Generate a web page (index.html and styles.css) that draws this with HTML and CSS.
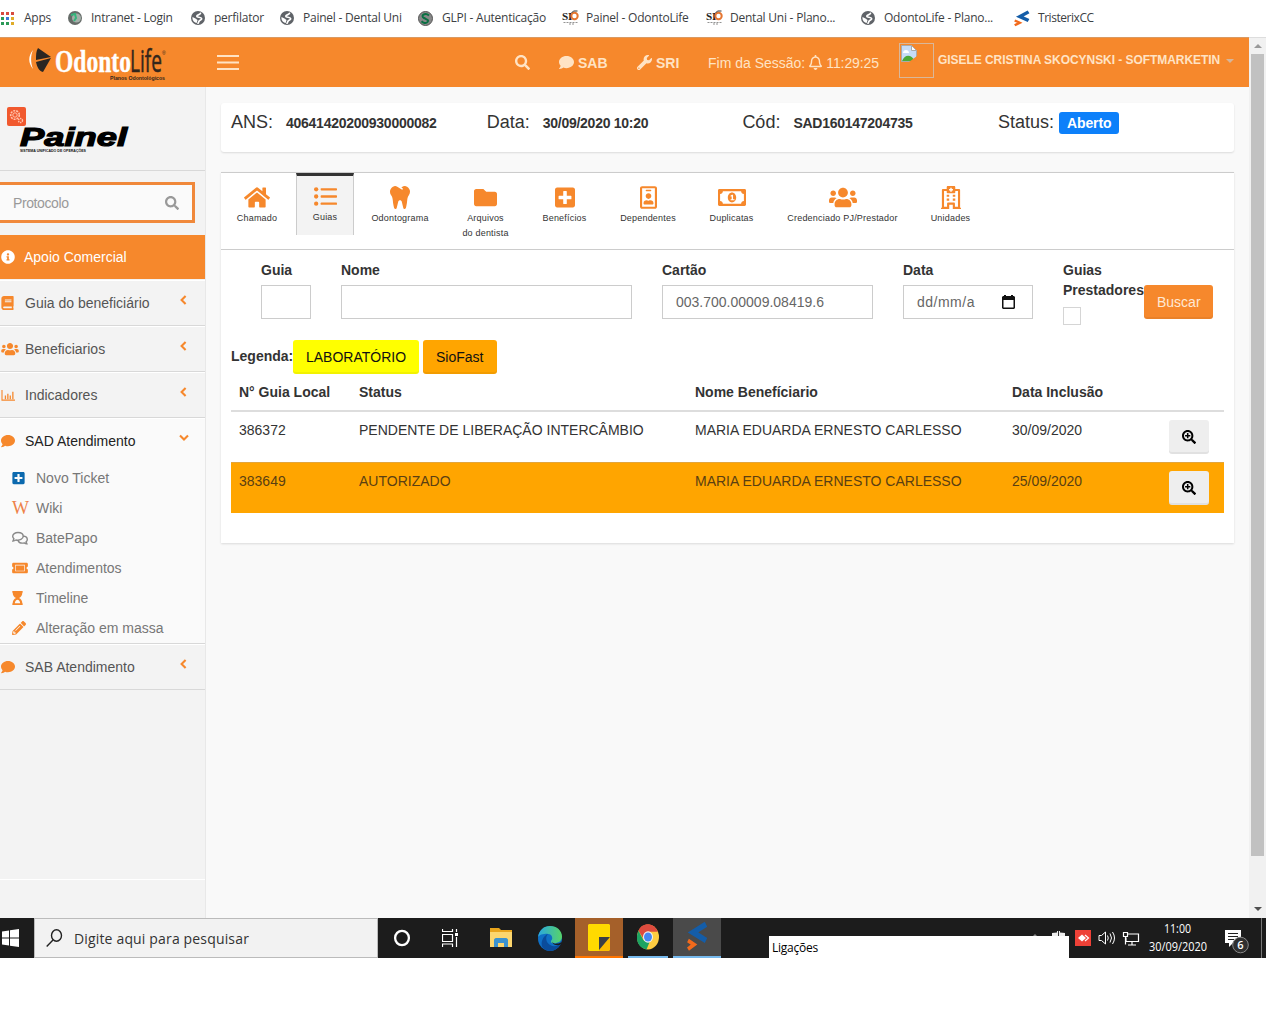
FILE: index.html
```html
<!DOCTYPE html>
<html lang="pt-BR">
<head>
<meta charset="utf-8">
<title>Painel - OdontoLife</title>
<link rel="stylesheet" href="styles.css">
</head>
<body>
<svg class="defs" width="0" height="0" aria-hidden="true">
  <symbol id="search" viewBox="0 0 512 512"><path d="M505 442.7L405.3 343c-4.5-4.5-10.6-7-17-7H372c27.6-35.3 44-79.7 44-128C416 93.1 322.9 0 208 0S0 93.1 0 208s93.1 208 208 208c48.3 0 92.7-16.4 128-44v16.3c0 6.4 2.5 12.5 7 17l99.7 99.7c9.4 9.4 24.6 9.4 33.9 0l28.3-28.3c9.4-9.4 9.4-24.6.1-34zM208 336c-70.7 0-128-57.2-128-128 0-70.7 57.2-128 128-128 70.7 0 128 57.2 128 128 0 70.7-57.2 128-128 128z"/></symbol>
  <symbol id="search-plus" viewBox="0 0 512 512"><path d="M304 192v32c0 6.600-5.400 12-12 12h-56v56c0 6.600-5.400 12-12 12h-32c-6.600 0-12-5.400-12-12v-56h-56c-6.600 0-12-5.400-12-12v-32c0-6.600 5.400-12 12-12h56v-56c0-6.600 5.400-12 12-12h32c6.600 0 12 5.400 12 12v56h56c6.600 0 12 5.400 12 12zm201 284.700L476.700 505c-9.400 9.400-24.600 9.400-33.900 0L343 405.300c-4.500-4.500-7-10.600-7-17V372c-35.300 27.600-79.700 44-128 44C93.100 416 0 322.900 0 208S93.100 0 208 0s208 93.100 208 208c0 48.300-16.400 92.700-44 128h16.300c6.400 0 12.500 2.500 17 7l99.700 99.700c9.300 9.400 9.300 24.600 0 34zM344 208c0-75.200-60.800-136-136-136S72 132.800 72 208s60.800 136 136 136 136-60.800 136-136z"/></symbol>
  <symbol id="comment" viewBox="0 0 512 512"><path d="M256 32C114.600 32 0 125.100 0 240c0 49.600 21.400 95 57 130.700C44.500 421.100 2.700 466 2.200 466.500c-2.200 2.300-2.800 5.700-1.500 8.700S4.800 480 8 480c66.300 0 116-31.800 140.600-51.400 32.700 12.300 69 19.400 107.400 19.400 141.400 0 256-93.100 256-208S397.400 32 256 32z"/></symbol>
  <symbol id="wrench" viewBox="0 0 512 512"><path d="M507.730 109.100c-2.240-9.030-13.540-12.090-20.120-5.510l-74.360 74.360-67.880-11.310-11.310-67.880 74.360-74.360c6.620-6.620 3.430-17.900-5.660-20.160-47.380-11.740-99.550.91-136.580 37.930-39.640 39.640-50.550 97.100-34.050 147.200L18.740 402.760c-24.990 24.990-24.990 65.510 0 90.500 24.990 24.990 65.510 24.990 90.500 0l213.210-213.210c50.120 16.710 107.470 5.680 147.370-34.220 37.070-37.070 49.700-89.320 37.910-136.730zM64 472c-13.250 0-24-10.750-24-24 0-13.260 10.750-24 24-24s24 10.740 24 24c0 13.250-10.750 24-24 24z"/></symbol>
  <symbol id="bell" viewBox="0 0 448 512"><path d="M439.390 362.290c-19.320-20.760-55.470-51.990-55.470-154.290 0-77.700-54.480-139.900-127.940-155.160V32c0-17.670-14.320-32-31.980-32s-31.980 14.330-31.980 32v20.840C118.560 68.100 64.080 130.300 64.080 208c0 102.300-36.150 133.530-55.470 154.290-6 6.450-8.660 14.160-8.610 21.710.11 16.400 12.980 32 32.100 32h383.800c19.120 0 32-15.600 32.100-32 .05-7.550-2.610-15.270-8.610-21.710zM67.530 368c21.220-27.970 44.420-74.330 44.530-159.420 0-.2-.06-.38-.06-.58 0-61.860 50.140-112 112-112s112 50.140 112 112c0 .2-.06.38-.06.58.11 85.100 23.310 131.460 44.530 159.420H67.530zM224 512c35.320 0 63.970-28.650 63.970-64H160.030c0 35.350 28.650 64 63.970 64z"/></symbol>
  <symbol id="home" viewBox="0 0 576 512"><path d="M280.370 148.260L96 300.110V464a16 16 0 0 0 16 16l112.060-.29a16 16 0 0 0 15.920-16V368a16 16 0 0 1 16-16h64a16 16 0 0 1 16 16v95.640a16 16 0 0 0 16 16.050L464 480a16 16 0 0 0 16-16V300L295.670 148.260a12.190 12.190 0 0 0-15.300 0zM571.600 251.470L488 182.560V44.050a12 12 0 0 0-12-12h-56a12 12 0 0 0-12 12v72.610L318.470 43a48 48 0 0 0-61 0L4.340 251.470a12 12 0 0 0-1.600 16.900l25.500 31A12 12 0 0 0 45.150 301l235.220-193.740a12.190 12.190 0 0 1 15.300 0L530.900 301a12 12 0 0 0 16.900-1.600l25.500-31a12 12 0 0 0-1.700-16.930z"/></symbol>
  <symbol id="list" viewBox="0 0 512 512"><circle cx="48" cy="96" r="48"/><circle cx="48" cy="256" r="48"/><circle cx="48" cy="416" r="48"/><rect x="148" y="70" width="364" height="52" rx="16"/><rect x="148" y="230" width="364" height="52" rx="16"/><rect x="148" y="390" width="364" height="52" rx="16"/></symbol>
  <symbol id="tooth" viewBox="0 0 448 512"><path d="M443.980 96.250c-11.010-45.220-47.110-82.060-92.010-93.720-32.190-8.360-63 5.100-89.140 24.330-3.250 2.390-6.960 3.730-10.500 5.480l28.320 18.210c7.420 4.770 9.580 14.670 4.800 22.110-4.460 6.950-14.270 9.860-22.110 4.800L162.830 12.840c-20.700-10.850-43.380-16.400-66.810-10.310-44.900 11.670-81 48.500-92.010 93.720-10.130 41.620-.42 80.810 21.500 110.430 23.360 31.570 32.680 68.660 36.290 107.350 4.400 47.160 10.330 94.160 20.940 140.320l7.800 33.950c3.190 13.870 15.490 23.700 29.670 23.700 13.970 0 26.150-9.550 29.540-23.160l34.470-138.420c4.560-18.320 20.960-31.160 39.760-31.160s35.200 12.850 39.760 31.160l34.470 138.420c3.390 13.610 15.570 23.160 29.540 23.160 14.180 0 26.480-9.830 29.670-23.700l7.800-33.950c10.610-46.150 16.530-93.160 20.940-140.320 3.610-38.700 12.930-75.780 36.290-107.350 21.950-29.610 31.660-68.800 21.530-110.430z"/></symbol>
  <symbol id="folder" viewBox="0 0 512 512"><path d="M464 128H272l-64-64H48C21.490 64 0 85.490 0 112v288c0 26.510 21.490 48 48 48h416c26.510 0 48-21.490 48-48V176c0-26.510-21.490-48-48-48z"/></symbol>
  <symbol id="plus-square" viewBox="0 0 448 512"><path d="M400 32H48C21.500 32 0 53.500 0 80v352c0 26.500 21.500 48 48 48h352c26.500 0 48-21.500 48-48V80c0-26.500-21.500-48-48-48zm-32 252c0 6.600-5.400 12-12 12h-92v92c0 6.600-5.400 12-12 12h-56c-6.600 0-12-5.400-12-12v-92H92c-6.600 0-12-5.400-12-12v-56c0-6.600 5.400-12 12-12h92v-92c0-6.600 5.400-12 12-12h56c6.600 0 12 5.400 12 12v92h92c6.600 0 12 5.400 12 12v56z"/></symbol>
  <symbol id="badge" viewBox="0 0 384 512"><path d="M336 0H48C21.500 0 0 21.500 0 48v416c0 26.500 21.500 48 48 48h288c26.500 0 48-21.500 48-48V48c0-26.500-21.500-48-48-48zm0 464H48V48h288v416zM144 112h96c8.800 0 16-7.200 16-16s-7.200-16-16-16h-96c-8.800 0-16 7.200-16 16s7.200 16 16 16zm48 176c35.300 0 64-28.700 64-64s-28.700-64-64-64-64 28.700-64 64 28.700 64 64 64zm-89.600 128h179.200c12.400 0 22.400-8.600 22.400-19.200v-19.200c0-31.800-30.100-57.600-67.200-57.600-10.800 0-18.700 8-44.800 8-26.900 0-33.400-8-44.800-8-37.100 0-67.200 25.800-67.200 57.600v19.200c0 10.600 10 19.200 22.400 19.200z"/></symbol>
  <symbol id="money" viewBox="0 0 640 512"><path fill-rule="evenodd" d="M32 64h576c18 0 32 14 32 32v320c0 18-14 32-32 32H32c-18 0-32-14-32-32V96c0-18 14-32 32-32zM48 176v160c35 0 64 29 64 64h416c0-35 29-64 64-64V176c-35 0-64-29-64-64H112c0 35-29 64-64 64zM320 144c53 0 96 50 96 112s-43 112-96 112-96-50-96-112 43-112 96-112zM344 192h-24l-37 22 12 24 17-10v68h-24v24h88v-24h-32z"/></symbol>
  <symbol id="users" viewBox="0 0 640 512"><path d="M96 224c35.300 0 64-28.700 64-64s-28.700-64-64-64-64 28.700-64 64 28.700 64 64 64zm448 0c35.300 0 64-28.700 64-64s-28.700-64-64-64-64 28.700-64 64 28.700 64 64 64zm32 32h-64c-17.600 0-33.500 7.100-45.100 18.600 40.300 22.100 68.900 62 75.100 109.400h66c17.700 0 32-14.300 32-32v-32c0-35.300-28.700-64-64-64zm-256 0c61.900 0 112-50.100 112-112S381.900 32 320 32 208 82.100 208 144s50.100 112 112 112zm76.800 32h-8.300c-20.800 10-43.900 16-68.500 16s-47.600-6-68.500-16h-8.300C179.600 288 128 339.600 128 403.200V432c0 26.500 21.500 48 48 48h288c26.500 0 48-21.500 48-48v-28.800c0-63.600-51.600-115.200-115.200-115.200zm-223.700-13.400C161.500 263.100 145.600 256 128 256H64c-35.300 0-64 28.700-64 64v32c0 17.700 14.300 32 32 32h65.900c6.300-47.400 34.900-87.300 75.200-109.400z"/></symbol>
  <symbol id="hospital" viewBox="0 0 448 512"><path fill-rule="evenodd" d="M0 488h20V88c0-12 12-24 24-24h84V24c0-13 11-24 24-24h144c13 0 24 11 24 24v40h84c12 0 24 12 24 24v400h20v24H264v-96h-80v96H0zM68 112v352h68v-72c0-13 11-24 24-24h128c13 0 24 11 24 24v72h68V112h-60v24c0 13-11 24-24 24H152c-13 0-24-11-24-24v-24zM208 40v28h-28v32h28v28h32v-28h28V68h-28V40zM128 192h56v48h-56zM264 192h56v48h-56zM128 280h56v48h-56zM264 280h56v48h-56z"/></symbol>
  <symbol id="info" viewBox="0 0 512 512"><path d="M256 8C119.043 8 8 119.083 8 256c0 136.997 111.043 248 248 248s248-111.003 248-248C504 119.083 392.957 8 256 8zm0 110c23.196 0 42 18.804 42 42s-18.804 42-42 42-42-18.804-42-42 18.804-42 42-42zm56 254c0 6.627-5.373 12-12 12h-88c-6.627 0-12-5.373-12-12v-24c0-6.627 5.373-12 12-12h12v-64h-12c-6.627 0-12-5.373-12-12v-24c0-6.627 5.373-12 12-12h64c6.627 0 12 5.373 12 12v100h12c6.627 0 12 5.373 12 12v24z"/></symbol>
  <symbol id="book" viewBox="0 0 448 512"><path fill-rule="evenodd" d="M96 0h328c13 0 24 11 24 24v336c0 8-4 14-9 18-4 15-4 59 0 74 5 4 9 10 9 18v18c0 13-11 24-24 24H96c-53 0-96-43-96-96V96C0 43 43 0 96 0zM96 384c-42 0-42 64 0 64h285v-64zM128 128v32h240v-32zM128 192v32h240v-32z"/></symbol>
  <symbol id="chart" viewBox="0 0 16 14"><path fill="none" stroke="currentColor" stroke-width="1.200" d="M1 1v11h14"/><path d="M4 7h1.400v4H4zM6.600 5H8v6H6.600zM9.200 7h1.400v4H9.200zM12 3h1.400v8H12z"/></symbol>
  <symbol id="comments" viewBox="0 0 16 14"><path fill="none" stroke="currentColor" stroke-width="1.400" d="M6 1.500c-3 0-5.300 1.600-5.300 3.800 0 1 .5 1.800 1.200 2.500L1 10c1.300 0 2.200-.5 3-1 3.600.8 7.200-1 7.200-3.700C11.200 3.100 9 1.500 6 1.500zM11 5c2.500.2 4.300 1.600 4.300 3.500 0 1-.5 1.800-1.200 2.400l.8 1.900c-1.200 0-2-.4-2.700-.9-2.600.6-5.300-.3-6.200-2.500"/></symbol>
  <symbol id="ticket" viewBox="0 0 576 512"><path fill-rule="evenodd" d="M48 64h480c27 0 48 21 48 48v96c-64 0-64 96 0 96v96c0 27-21 48-48 48H48c-27 0-48-21-48-48v-96c64 0 64-96 0-96v-96c0-27 21-48 48-48zM112 136v240h352V136zM136 160h304v192H136z"/></symbol>
  <symbol id="hourglass" viewBox="0 0 384 512"><path fill-rule="evenodd" d="M16 0h352c9 0 16 7 16 16v32c0 9-7 16-16 16 0 91-51 168-120 192 69 24 120 101 120 192 9 0 16 7 16 16v32c0 9-7 16-16 16H16c-9 0-16-7-16-16v-32c0-9 7-16 16-16 0-91 51-168 120-192C67 232 16 155 16 64 7 64 0 57 0 48V16C0 7 7 0 16 0zM94 448h196c-10-80-48-130-98-130s-88 50-98 130z"/></symbol>
  <symbol id="pencil" viewBox="0 0 512 512"><path fill-rule="evenodd" d="M497.900 142.100l-46.100 46.100c-4.700 4.700-12.300 4.700-17 0l-111-111c-4.700-4.700-4.700-12.300 0-17l46.100-46.100c18.700-18.700 49.100-18.700 67.900 0l60.100 60.100c18.800 18.700 18.800 49.100 0 67.900zM284.200 99.800L21.600 362.400.4 483.900c-2.900 16.400 11.400 30.600 27.800 27.800l121.500-21.300 262.600-262.600c4.700-4.700 4.700-12.300 0-17l-111-111c-4.800-4.700-12.400-4.700-17.100 0zM124 340l154-154c13-8 26 5 18 18L142 358c-13 8-26-5-18-18zM88 424h48v36l-65 11-30-30 11-65h36z"/></symbol>
  <symbol id="left" viewBox="0 0 7 10"><path d="M5.600 1L1.600 5l4 4" fill="none" stroke="currentColor" stroke-width="2.100"/></symbol>
  <symbol id="down" viewBox="0 0 10 7"><path d="M1 1.400l4 4 4-4" fill="none" stroke="currentColor" stroke-width="2.100"/></symbol>
  <symbol id="globe" viewBox="0 0 14 14"><circle cx="7" cy="7" r="7" fill="#5f6368"/><path fill="none" stroke="#fff" stroke-width="1.700" stroke-linecap="round" d="M9.500 2.300c-.8 2-3.800 1.300-3.700 3 .1 1.500 4.300.3 4.800 2.200.4 1.700-1.700 1.300-2.600 2.700-.5.800-.3 1.500-1 2"/><path fill="#fff" d="M1.500 6l3 1.500L6.500 9l-.8 3C3 11.500 1 9 1.500 6z"/></symbol>
  <symbol id="tri" viewBox="0 0 22 26"><path d="M20 3L8 10l12 6" fill="none" stroke="#145da8" stroke-width="5"/><path d="M1 16l7 3.500-7 4" fill="none" stroke="#f26a1c" stroke-width="3.500"/></symbol>
</svg>

<div class="bookmarks">
  <div><svg viewBox="0 0 13 13" width="13" height="13"><path fill="#d84b40" d="M0 0h3v3H0zM5 0h3v3H5zM10 0h3v3h-3z"/><path fill="#2c9a57" d="M0 5h3v3H0zM0 10h3v3H0zM5 10h3v3H5z"/><path fill="#3c78d8" d="M5 5h3v3H5z"/><path fill="#dfac29" d="M10 5h3v3h-3zM10 10h3v3h-3z"/></svg><span>Apps</span></div>
  <div><svg width="14" height="14" viewBox="0 0 14 14"><circle cx="7" cy="7" r="7" fill="#656b68"/><circle cx="8.500" cy="7" r="4.500" fill="#a4afa9"/><path d="M3 4l4-1 1 4-2 3" stroke="#35b57c" stroke-width="2" fill="none"/></svg><span>Intranet - Login</span></div>
  <div><svg width="14" height="14"><use href="#globe"/></svg><span>perfilator</span></div>
  <div><svg width="14" height="14"><use href="#globe"/></svg><span>Painel - Dental Uni</span></div>
  <div><svg width="15" height="15" viewBox="0 0 15 15"><circle cx="7.500" cy="7.500" r="7" fill="#888" stroke="#555"/><path d="M11 4.500C7 1 2 5 6 7s5 2 3.500 4-4.500.8-6-.8" stroke="#0a7043" stroke-width="2" fill="none"/></svg><span>GLPI - Autenticação</span></div>
  <div><svg width="17" height="16" viewBox="0 0 17 16"><text class="si" x="0" y="9.500" textLength="10" lengthAdjust="spacingAndGlyphs">SI</text><circle cx="12.500" cy="6" r="3.200" fill="none" stroke="#e57631" stroke-width="2"/><path d="M9.500 3l2-2h4" stroke="#333" fill="none"/><path d="M1.500 12.500h14M7 14h5" stroke="#777" stroke-width=".8" stroke-dasharray="2 1"/></svg><span>Painel - OdontoLife</span></div>
  <div><svg width="17" height="16" viewBox="0 0 17 16"><text class="si" x="0" y="9.500" textLength="10" lengthAdjust="spacingAndGlyphs">SI</text><circle cx="12.500" cy="6" r="3.200" fill="none" stroke="#e57631" stroke-width="2"/><path d="M9.500 3l2-2h4" stroke="#333" fill="none"/><path d="M1.500 12.500h14M7 14h5" stroke="#777" stroke-width=".8" stroke-dasharray="2 1"/></svg><span>Dental Uni - Plano...</span></div>
  <div><svg width="14" height="14"><use href="#globe"/></svg><span>OdontoLife - Plano...</span></div>
  <div><svg width="16" height="17" viewBox="0 0 22 26" preserveAspectRatio="none"><use href="#tri" width="22" height="26"/></svg><span>TristerixCC</span></div>
</div>

<div class="window">
  <div class="page">
    <header class="topbar">
      <svg class="brand" width="206" height="50" viewBox="0 37 206 50">
        <path d="M33 49c-5 6-5 13 0 19-2.500-7-2.500-13 0-19z" fill="#fff"/>
        <path d="M38 47l13 9-15 3c0-5 0-9 2-12zM36 61l15-4-8 14c-4-1-6-5-7-10z" fill="#2b2622"/>
        <text x="55" y="71" class="odonto" textLength="76" lengthAdjust="spacingAndGlyphs">Odonto</text>
        <text x="130" y="71" class="life" textLength="32" lengthAdjust="spacingAndGlyphs">Life</text>
        <text x="162" y="54" class="reg">®</text>
        <text x="110" y="79" class="planos" textLength="55" lengthAdjust="spacingAndGlyphs">Planos Odontológicos</text>
      </svg>
      <svg class="burger" width="22" height="15"><path d="M0 1h22M0 7.500h22M0 14h22" stroke="#ffe3c4" stroke-width="2"/></svg>
      <svg class="t-search" width="15" height="15"><use href="#search"/></svg>
      <div class="t-item t-sab"><svg width="15" height="15"><use href="#comment"/></svg><b>SAB</b></div>
      <div class="t-item t-sri"><svg width="15" height="15"><use href="#wrench"/></svg><b>SRI</b></div>
      <div class="t-item t-end"><span>Fim da Sessão:</span><svg width="13" height="15"><use href="#bell"/></svg><span class="clock">11:29:25</span></div>
      <div class="avatar"><svg width="16" height="17" viewBox="0 0 16 17"><path d="M.5.5h10l5 5v11H.5z" fill="#c7dcf7" stroke="#aaa"/><path d="M10.500.5v5h5z" fill="#fff" stroke="#aaa"/><path d="M2 8c0-4 6-4 6 0z" fill="#fff"/><path d="M1 16c3-7 9-7 13 0z" fill="#4caa37"/><path d="M8 17l8-6v6z" fill="#f6872b"/></svg></div>
      <b class="user">GISELE CRISTINA SKOCYNSKI - SOFTMARKETIN</b>
      <i class="caret"></i>
    </header>
    <div class="cols">
      <nav class="side">
        <div class="painel">
          <svg width="150" height="60" viewBox="0 100 150 60">
            <rect x="7" y="107" width="19" height="19" rx="2" fill="#f1592e"/>
            <circle cx="15" cy="115" r="4.300" fill="none" stroke="#ffc3ad" stroke-width="1.600" stroke-dasharray="2 1"/><circle cx="15" cy="115" r="2.200" fill="none" stroke="#ffc3ad"/><circle cx="20.500" cy="120.500" r="2" fill="none" stroke="#ffc3ad" stroke-width="1.400" stroke-dasharray="1.300 .7"/>
            <text x="20" y="146" class="pn" textLength="107" lengthAdjust="spacingAndGlyphs">Painel</text>
            <text x="20" y="151.500" class="pn-sub" textLength="66" lengthAdjust="spacingAndGlyphs">SISTEMA UNIFICADO DE OPERAÇÕES</text>
          </svg>
        </div>
        <div class="proto"><span>Protocolo</span><svg width="14" height="14"><use href="#search"/></svg></div>
        <div class="row active"><svg width="14" height="14"><use href="#info"/></svg><span>Apoio Comercial</span></div>
        <div class="row"><svg width="13" height="14"><use href="#book"/></svg><span>Guia do beneficiário</span><svg class="chev" width="7" height="10"><use href="#left"/></svg></div>
        <div class="row"><svg width="18" height="14"><use href="#users"/></svg><span>Beneficiarios</span><svg class="chev" width="7" height="10"><use href="#left"/></svg></div>
        <div class="row"><svg width="15" height="13"><use href="#chart"/></svg><span>Indicadores</span><svg class="chev" width="7" height="10"><use href="#left"/></svg></div>
        <div class="open">
          <div class="row dark"><svg width="14" height="14"><use href="#comment"/></svg><span>SAD Atendimento</span><svg class="chev" width="10" height="7"><use href="#down"/></svg></div>
          <div class="sub"><svg class="blue" width="13" height="14"><use href="#plus-square"/></svg><span>Novo Ticket</span></div>
          <div class="sub"><i class="w">W</i><span>Wiki</span></div>
          <div class="sub"><svg class="gray" width="16" height="14"><use href="#comments"/></svg><span>BatePapo</span></div>
          <div class="sub"><svg width="16" height="14"><use href="#ticket"/></svg><span>Atendimentos</span></div>
          <div class="sub"><svg width="11" height="14"><use href="#hourglass"/></svg><span>Timeline</span></div>
          <div class="sub"><svg width="14" height="14"><use href="#pencil"/></svg><span>Alteração em massa</span></div>
        </div>
        <div class="row"><svg width="14" height="14"><use href="#comment"/></svg><span>SAB Atendimento</span><svg class="chev" width="7" height="10"><use href="#left"/></svg></div>
        <div class="side-foot"></div>
      </nav>
      <main>
        <section class="card summary">
          <div><span>ANS:</span><b>40641420200930000082</b></div>
          <div><span>Data:</span><b>30/09/2020 10:20</b></div>
          <div><span>Cód:</span><b>SAD160147204735</b></div>
          <div><span>Status:</span><em>Aberto</em></div>
        </section>
        <section class="card panel">
          <div class="tabs">
            <div class="tab t1"><svg width="26" height="23"><use href="#home"/></svg><span>Chamado</span></div>
            <div class="tab t2 on"><svg width="23" height="23"><use href="#list"/></svg><span>Guias</span></div>
            <div class="tab t3"><svg width="20" height="23"><use href="#tooth"/></svg><span>Odontograma</span></div>
            <div class="tab t4"><svg width="23" height="23"><use href="#folder"/></svg><span>Arquivos<br>do dentista</span></div>
            <div class="tab t5"><svg width="20" height="23"><use href="#plus-square"/></svg><span>Benefícios</span></div>
            <div class="tab t6"><svg width="17" height="23"><use href="#badge"/></svg><span>Dependentes</span></div>
            <div class="tab t7"><svg width="28" height="23"><use href="#money"/></svg><span>Duplicatas</span></div>
            <div class="tab t8"><svg width="28" height="23"><use href="#users"/></svg><span>Credenciado PJ/Prestador</span></div>
            <div class="tab t9"><svg width="20" height="23"><use href="#hospital"/></svg><span>Unidades</span></div>
          </div>
          <div class="form">
            <label>Guia<div class="inp"></div></label>
            <label>Nome<div class="inp"></div></label>
            <label>Cartão<div class="inp">003.700.00009.08419.6</div></label>
            <label>Data<div class="inp date"><span>dd/mm/a</span><svg width="13" height="14" viewBox="0 0 13 14"><path fill-rule="evenodd" d="M1 1h1V0h2v1h5V0h2v1h1l1 1v11l-1 1H1l-1-1V2zm.500 4v7.500h10V5z"/></svg></div></label>
            <label>Guias<br>Prestadores<div class="check"></div></label>
            <div class="btn buscar">Buscar</div>
          </div>
          <div class="legend"><b>Legenda:</b><div class="btn lab">LABORATÓRIO</div><div class="btn sio">SioFast</div></div>
          <div class="tr th"><span>N° Guia Local</span><span>Status</span><span>Nome Benefíciario</span><span>Data Inclusão</span></div>
          <div class="tr"><span>386372</span><span>PENDENTE DE LIBERAÇÃO INTERCÂMBIO</span><span>MARIA EDUARDA ERNESTO CARLESSO</span><span>30/09/2020</span><div class="btn zoom"><svg width="14" height="14"><use href="#search-plus"/></svg></div></div>
          <div class="tr hl"><span>383649</span><span>AUTORIZADO</span><span>MARIA EDUARDA ERNESTO CARLESSO</span><span>25/09/2020</span><div class="btn zoom"><svg width="14" height="14"><use href="#search-plus"/></svg></div></div>
        </section>
      </main>
    </div>
  </div>
  <div class="scroll"><i class="up"></i><div class="thumb"></div><i class="dn"></i></div>
</div>

<div class="taskbar">
  <div class="start"><svg width="17" height="18" viewBox="0 0 17 18"><path fill="#fff" d="M0 2.500l7-1v7H0zM8 1.300L17 0v8.500H8zM0 9.500h7v7l-7-1zM8 9.500h9V18l-9-1.300z"/></svg></div>
  <div class="tsearch"><svg width="17" height="18" viewBox="0 0 17 18"><ellipse cx="10.500" cy="6.500" rx="5" ry="5.700" fill="none" stroke="#222" stroke-width="1.400"/><path d="M7 11L.7 17.500" stroke="#222" stroke-width="1.400"/></svg><span>Digite aqui para pesquisar</span></div>
  <div class="app"><svg width="18" height="18" viewBox="0 0 18 18"><ellipse cx="9" cy="9" rx="6.900" ry="7.200" fill="none" stroke="#fff" stroke-width="2.300"/></svg></div>
  <div class="app"><svg width="17" height="18" viewBox="0 0 17 18"><path d="M.5 0v2.500h10V0M.5 18v-3h10v3M.5 5.500h10v7H.500zM14.500 0v3M14.500 8v10" fill="none" stroke="#fff" stroke-width="1.200"/><path d="M13 4h3v3h-3z" fill="#fff"/></svg></div>
  <div class="app files"><svg width="22" height="20" viewBox="0 0 22 20"><path fill="#e9a51c" d="M0 0h9l2 2h11v3H0z"/><path fill="#fcd66e" d="M0 4h22v15H0z"/><path fill="#3b92cf" d="M4 19v-7c0-1 1-2 2-2h10c1 0 2 1 2 2v7h-4v-4H8v4z"/></svg></div>
  <div class="app"><svg width="24" height="25" viewBox="0 0 24 26" preserveAspectRatio="none"><defs><linearGradient id="eg" x2="1"><stop stop-color="#2aa7e0"/><stop offset="1" stop-color="#57d468"/></linearGradient></defs><ellipse cx="12" cy="13" rx="12" ry="13" fill="#0f6fc5"/><path d="M10 8c-4 5-1 12 6 13 3 0 5-1 7-3-4 9-13 10-18 5C2 19 4 11 10 8z" fill="#0a4c9b"/><path d="M0 12C1 4 6 0 12 0c7 0 12 5 12 11 0 5-4 7-8 7-3 0-4-2-2-4 1-3-1-6-5-6-4 0-8 1-9 4z" fill="url(#eg)"/><path d="M14 16c1 2 3 2.500 5 2.300 2-.2 4-1 5-2.300l-1 3c-3 2-8 1-9-3z" fill="#1c1c1c"/></svg></div>
  <div class="app sticky"><svg width="22" height="27" viewBox="0 0 22 27"><path d="M1 0h20l1 1v14l-9 12H1l-1-1V1z" fill="#ffda00"/><path d="M11 14h11v12l-1 1H11z" fill="#fbbd00"/><path d="M11 13h11L11 26z" fill="#3b3f45"/></svg></div>
  <div class="app chrome"><svg width="22" height="26" viewBox="0 0 22 27" preserveAspectRatio="none"><ellipse cx="11" cy="13.500" rx="11" ry="13" fill="#ffcd41"/><path d="M1.500 7C5-2 17-2 20.700 8H11l-4 8z" fill="#dd4b3e"/><path d="M1.500 7l5 10 6 2-3 7.400C0 25-2 14 1.500 7z" fill="#1da362"/><ellipse cx="11" cy="13.500" rx="5" ry="6" fill="#f3f3f3"/><ellipse cx="11" cy="13.500" rx="4" ry="4.800" fill="#4687f3"/></svg></div>
  <div class="app tris"><svg width="22" height="30" viewBox="0 0 22 26" preserveAspectRatio="none"><path d="M20 2L7 9l13 7" fill="none" stroke="#145da8" stroke-width="5"/><path d="M2 16l6 3.500-6 4" fill="none" stroke="#f26a1c" stroke-width="3.500"/></svg></div>
  <div class="gap"></div>
  <svg class="tray" width="197" height="40" viewBox="1069 918 197 40">
    <rect x="1075" y="930" width="16" height="16" fill="#ee4137"/><path d="M1078 938l4-3.500 4 3.500-4 3.500z" fill="#fff"/><path d="M1085 935l3.500 3-3.500 3" fill="none" stroke="#fff" stroke-width="1.200"/>
    <path d="M1099 935.500h2.500l4-3.500v12l-4-3.500h-2.500z" fill="none" stroke="#fff"/><path d="M1107.500 935.500q1.500 2.500 0 5M1110 933.500q3 4.500 0 9M1112.500 932q4 6 0 12" fill="none" stroke="#fff"/>
    <path d="M1127.500 934h11v7.500h-12.500v-4M1132 941.500v3.500M1128 945h8M1123.500 932.500h4v4h-4zM1125.500 936.500v8" fill="none" stroke="#fff" stroke-width="1.200"/>
    <text x="1164" y="932.500" class="tt" textLength="27" lengthAdjust="spacingAndGlyphs">11:00</text>
    <text x="1149" y="951" class="tt" textLength="58" lengthAdjust="spacingAndGlyphs">30/09/2020</text>
    <path d="M1225 930h16v13h-8l-4 4v-4h-4z" fill="#fff"/><path d="M1228 933.500h10M1228 936.500h10M1228 939.500h6" stroke="#222"/>
    <circle cx="1240.500" cy="945" r="7.800" fill="#303030" stroke="#888"/><text x="1237.300" y="949" class="tt six">6</text>
    <path d="M1261.500 918v40" stroke="#777"/>
  </svg>
  <div class="tip">Ligações</div>
  <svg class="peek" width="36" height="5" viewBox="0 0 36 5"><path d="M2 5l2-2 2 2z" fill="#888"/><path d="M21 5V2l5-.5V0h3v1.500l5 .5v3z" fill="#eee"/><path d="M27.500 0v5" stroke="#333"/></svg>
</div>
</body>
</html>
```
FILE: styles.css
```css
* { box-sizing: border-box; }
body { margin: 0; background: #fff; font: 14px/20px "Liberation Sans", Arial, sans-serif; color: #333; width: 1280px; height: 1024px; overflow: hidden; }
svg { display: block; fill: currentColor; flex: none; }
.defs { position: absolute; }
span, b, em { white-space: nowrap; }

.bookmarks { display: grid; grid-template-columns: 67px 123px 89px 138px 144px 144px 155px 153px 1fr; width: 1280px; height: 37px; padding: 0 0 1px 1px; font: 12px/16px "Open Sans", sans-serif; letter-spacing: -.23px; color: #3c4043; }
.bookmarks > div { display: grid; grid-template-columns: 23px 1fr; align-items: center; }
.bookmarks > div:nth-child(n+5):nth-child(-n+7), .bookmarks > div:last-child { grid-template-columns: 24px 1fr; }
.bookmarks > div:nth-child(6) { grid-template-columns: 25px 1fr; }
.bookmarks > div:last-child { letter-spacing: -.45px; }
.si { font: bold 10px "Liberation Serif", serif; fill: #222; }

.window { display: flex; width: 1266px; height: 881px; }
.page { width: 1249px; display: flex; flex-direction: column; }
.topbar { display: flex; align-items: center; height: 50px; background: #f6882c; color: #ffe3c4; border-top: 1px solid #d99a63; flex: none; }
.odonto { font: bold 31px "Liberation Serif", serif; fill: #fff; stroke: #fff; stroke-width: .4px; }
.life { font: 31px "Open Sans", sans-serif; fill: #33261c; stroke: #33261c; stroke-width: .5px; }
.reg { font: 5px "Liberation Sans", sans-serif; fill: #33261c; }
.planos { font: bold 6px "Liberation Sans", sans-serif; fill: #33261c; }
.burger { margin-left: 11px; }
.t-search { margin-left: 276px; }
.t-item { display: flex; align-items: center; }
.t-sab { margin-left: 29px; gap: 4px; width: 78px; }
.t-sri { gap: 4px; width: 71px; }
.t-end { gap: 4px; width: 191px; }
.clock { letter-spacing: -.1px; }
.avatar { width: 35px; height: 35px; border: 1px solid #d9b79a; padding: 1px; margin-top: -4px; }
.user { font-size: 12px; margin: -5px 0 0 4px; width: 288px; letter-spacing: -.05px; }
.caret { border: 4px solid transparent; border-top-color: #d5b69c; border-bottom: 0; margin-top: -3px; }

.cols { display: flex; flex: 1; }
.side { width: 206px; flex: none; background: #f3f3f3; border-right: 1px solid #e8e8e8; display: flex; flex-direction: column; color: #555; }
.painel { height: 84px; border-bottom: 1px solid #d8d8d8; padding-top: 13px; }
.pn { font: italic bold 26px "Liberation Sans", sans-serif; fill: #000; stroke: #000; stroke-width: 1.2px; }
.pn-sub { font: bold 4px "Liberation Sans", sans-serif; fill: #111; }
.proto { display: flex; justify-content: space-between; align-items: center; width: 195px; height: 41px; margin: 11px 0 12px; padding: 0 13px; border: 3px solid #f0883a; border-left: 0; background: #fafafa; color: #999; letter-spacing: -.4px; }
.row { display: flex; height: 46px; align-items: center; border-bottom: 1px solid #d8d8d8; border-top: 1px solid #fff; padding-left: 1px; position: relative; }
.row > svg:first-child, .sub > svg { color: #f6882c; }
.row > span { position: absolute; left: 25px; }
.row.active { background: #f6882c; color: #fff; height: 44px; margin-bottom: 1px; border-color: #f6882c; }
.row.active > svg:first-child { color: #fff; }
.row.active > span { left: 24px; }
.row .chev { color: #f6882c; margin: -6px 18px 0 auto; }
.open { background: #fafafa; border-bottom: 1px solid #d8d8d8; height: 226px; }
.open .row { border-bottom: 0; height: 45px; }
.open .row .chev { margin: -8px 16px 0 auto; }
.row.dark { color: #222; }
.sub { display: grid; grid-template-columns: 24px 1fr; align-items: center; height: 30px; padding-left: 12px; color: #777; }
.sub .blue { color: #0b69ae; }
.sub .gray { color: #888; }
.w { font: 18px "Liberation Serif", serif; color: #ee8148; }
.side-foot { margin-top: 189px; border-top: 1px solid #fff; flex: 1; }

main { flex: 1; min-width: 0; background: #f9f9f9; padding: 16px 15px; }
.card { background: #fff; box-shadow: 0 1px 2px rgba(0,0,0,.12); }
.summary { display: grid; grid-template-columns: repeat(4, 255.700px); height: 49px; padding: 9px 0 0 10px; border-radius: 3px; overflow: hidden; }
.summary > div { display: flex; align-items: baseline; height: 24px; gap: 13px; }
.summary span { font-size: 18px; }
.summary b { letter-spacing: -.26px; }
.summary div:last-child { gap: 5px; }
.summary em { background: #0d80fa; color: #fff; font: bold 14px/22px "Liberation Sans", sans-serif; padding: 0 8px; border-radius: 3px; letter-spacing: -.15px; }
.panel { margin-top: 20px; height: 371px; border-top: 1px solid #ccc; }
.tabs { display: flex; height: 77px; border-bottom: 1px solid #ccc; }
.tab { display: flex; flex-direction: column; align-items: center; font-size: 9px; line-height: 15px; padding-top: 13px; text-align: center; letter-spacing: .2px; }
.tab svg { color: #f6882c; margin-bottom: 2px; }
.t1 { width: 40px; margin: 0 19px 0 16px; }
.t2 { width: 58px; margin-right: 17px; }
.t3 { width: 58px; margin-right: 33px; }
.t4 { width: 47px; margin-right: 33px; }
.t5 { width: 45px; margin-right: 33px; }
.t6 { width: 56px; margin-right: 33px; }
.t7 { width: 45px; margin-right: 33px; }
.t8 { width: 111px; margin-right: 32px; }
.t9 { width: 41px; }
.tab.on { height: 62px; background: #f3f3f3; border: 1px solid #ccc; border-top: 3px solid #333; border-bottom: 0; padding-top: 9px; }
.form { display: grid; grid-template-columns: 50px 291px 211px 130px 51px 69px; column-gap: 30px; padding: 10px 0 0 40px; height: 90px; font-weight: bold; }
.inp { height: 34px; border: 1px solid #ccc; margin-top: 5px; padding: 6px 13px; font-weight: normal; color: #666; }
.date { display: flex; align-items: center; justify-content: space-between; padding-right: 17px; letter-spacing: .5px; }
.date svg { color: #111; }
.check { width: 18px; height: 18px; border: 1px solid #d5d5d5; margin-top: 7px; }
.btn { height: 34px; border-radius: 3px; padding: 6px 13px; line-height: 22px; font-weight: normal; letter-spacing: 0; box-shadow: inset 0 -2px rgba(0,0,0,.05); }
.buscar { background: #f6882c; color: #ffe9d5; margin-top: 25px; }
.legend { display: flex; padding-left: 10px; height: 44px; color: #333; }
.legend b { line-height: 32px; width: 62px; }
.legend .btn { color: #111; }
.lab { background: #ff0; width: 126px; margin-right: 4px; }
.sio { background: #ffa500; width: 74px; }
.tr { display: grid; grid-template-columns: 120px 336px 317px 157px 40px; height: 50px; padding: 8px 0 0 8px; margin: 0 10px; }
.tr.th { height: 30px; padding-top: 0; border-bottom: 2px solid #ddd; font-weight: bold; margin-top: -2px; }
.tr.hl { height: 51px; background: #ffa500; color: #5a3f12; border-top: 1px solid #e3a53c; }
.zoom { background: #eee; color: #000; padding: 10px 13px; }

.scroll { width: 17px; background: #f1f1f1; padding: 0 2px; display: flex; flex-direction: column; align-items: center; border-top: 1px solid #ddd; }
.up { border: 4px solid transparent; border-bottom-color: #999; border-top: 0; margin: 6px 0; }
.thumb { width: 13px; height: 802px; background: #c1c1c1; }
.dn { border: 4px solid transparent; border-top-color: #505050; border-bottom: 0; margin-top: 51px; }

.taskbar { position: relative; display: flex; width: 1266px; height: 40px; background: #1c1c1c; }
.start { width: 34px; padding: 11px 0 0 2px; }
.tsearch { width: 344px; background: #f2f2f2; border: 1px solid #bbb; display: flex; align-items: center; gap: 11px; padding-left: 11px; font: 14px "Open Sans", sans-serif; letter-spacing: .16px; color: #333; }
.app { width: 48px; display: flex; align-items: center; justify-content: center; }
.files { width: 53px; }
.files + .app { padding-right: 3px; }
.app.sticky { background: #a5602a; border-bottom: 2px solid #ff7400; }
.chrome { border-bottom: 2px solid #76b9ed; width: 40px; margin: 0 5px; }
.tris { background: #4a4a4a; border-bottom: 2px solid #76b9ed; }
.gap { flex: 1; }
.tt { font: 12px "Open Sans", sans-serif; fill: #fff; }
.six { font-weight: 600; font-size: 11px; }
.tip { position: absolute; left: 769px; top: 18px; width: 300px; height: 22px; background: #fff; color: #000; font: 12px/23px "Open Sans", sans-serif; padding-left: 3px; letter-spacing: -.25px; }
.peek { position: absolute; left: 1031px; top: 13px; }
```
